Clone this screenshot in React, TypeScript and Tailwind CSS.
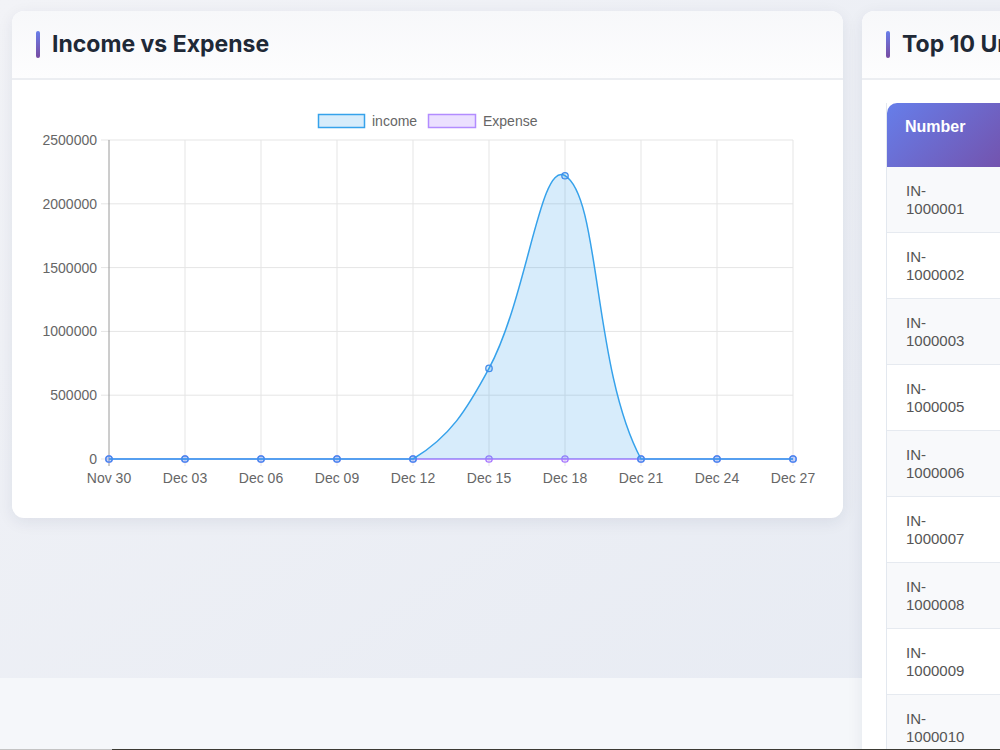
const X0 = 109;
const STEP = 76;
const labels = ["Nov 30", "Dec 03", "Dec 06", "Dec 09", "Dec 12", "Dec 15", "Dec 18", "Dec 21", "Dec 24", "Dec 27"];
const income = [0, 0, 0, 0, 0, 710000, 2220000, 0, 0, 0];
const yTicks = [2500000, 2000000, 1500000, 1000000, 500000, 0];

const yOf = (v: number) => 459 - (v / 2500000) * 319;

const curve =
  "M109,459 L413,459 C450,436.9 466.9,409.6 489,368.4 C527.7,296.3 539.8,160.7 565,175.7 C600.6,196.9 592.7,369 641,459 L793,459";

const font = "Liberation Sans, Arial, sans-serif";

function Chart() {
  return (
    <svg width="783" height="391" viewBox="36 103 783 391" className="block">
      {/* legend */}
      <rect x="318.5" y="114.5" width="46" height="13" fill="rgba(54,162,235,0.2)" stroke="rgb(54,162,235)" strokeWidth="1.5" />
      <text x="372" y="126" fontSize="14" fill="#666" fontFamily={font}>income</text>
      <rect x="428.5" y="114.5" width="47" height="13" fill="rgba(153,102,255,0.2)" stroke="rgb(178,140,255)" strokeWidth="1.5" />
      <text x="483" y="126" fontSize="14" fill="#666" fontFamily={font}>Expense</text>

      {/* grid */}
      {yTicks.map((t) => (
        <g key={t}>
          <line x1="101" x2="793" y1={yOf(t)} y2={yOf(t)} stroke="#e5e5e5" strokeWidth="1" />
          <text x="97" y={yOf(t) + 5} textAnchor="end" fontSize="14" fill="#666" fontFamily={font}>
            {t}
          </text>
        </g>
      ))}
      {labels.map((l, i) => (
        <g key={l}>
          <line x1={X0 + STEP * i} x2={X0 + STEP * i} y1="140" y2="466" stroke={i === 0 ? "#9a9a9a" : "#e5e5e5"} strokeWidth="1" />
          <text x={X0 + STEP * i} y="483" textAnchor="middle" fontSize="14" fill="#666" fontFamily={font}>
            {l}
          </text>
        </g>
      ))}

      {/* expense */}
      <line x1="109" x2="793" y1="459" y2="459" stroke="rgb(168,120,255)" strokeWidth="1.5" />
      {labels.map((l, i) => (
        <circle key={"e" + l} cx={X0 + STEP * i} cy="459" r="3.2" fill="rgba(153,102,255,0.2)" stroke="rgb(168,120,255)" strokeWidth="1.3" />
      ))}

      {/* income */}
      <path d={curve + " Z"} fill="rgba(54,162,235,0.2)" />
      <path d={curve} fill="none" stroke="rgb(54,162,235)" strokeWidth="1.5" />
      {income.map((v, i) => (
        <circle key={"i" + i} cx={X0 + STEP * i} cy={yOf(v)} r="3.2" fill="rgba(54,162,235,0.2)" stroke="rgb(66,140,235)" strokeWidth="1.3" />
      ))}
    </svg>
  );
}

function CardHeader({ title }: { title: string }) {
  return (
    <div className="flex h-[69px] items-center gap-3 border-b-2 border-[#eceef2] bg-gradient-to-b from-[#f7f8fa] to-[#fdfdfe] px-6">
      <span className="h-[27px] w-1 rounded-full bg-gradient-to-b from-[#667eea] to-[#764ba2]" />
      <h3 className="whitespace-nowrap font-['Inter',sans-serif] text-[23px] font-bold text-[#1f2937]">{title}</h3>
    </div>
  );
}

const invoices = ["1000001", "1000002", "1000003", "1000005", "1000006", "1000007", "1000008", "1000009", "1000010"];

function TableCard() {
  return (
    <div className="w-[831px] shrink-0 overflow-hidden rounded-xl bg-white shadow-[0_4px_16px_rgba(30,40,80,0.08)]">
      <CardHeader title="Top 10 Unpaid Invoices" />
      <div className="px-6 pt-[23px]">
        <div className="border-l border-[#e3e8ef]">
          <div className="h-[64px] rounded-tl-[10px] bg-[linear-gradient(135deg,#667eea_0px,#764ba2_150px)] pl-[18px] pt-[12px] text-[16px] font-bold text-white">
            Number
          </div>
          {invoices.map((n, i) => (
            <div
              key={n}
              className={`border-b border-[#e6eaf0] pl-[19px] pb-[14px] pt-[15px] text-[15px] leading-[18px] text-[#555] ${i % 2 === 0 ? "bg-[#f8f9fb]" : "bg-white"}`}
            >
              IN-
              <br />
              {n}
            </div>
          ))}
        </div>
      </div>
    </div>
  );
}

export default function App() {
  return (
    <div className="relative h-[750px] w-[1000px] overflow-hidden bg-[#f5f7fa] font-['Liberation_Sans',Arial,sans-serif]">
      <div className="h-[678px] bg-gradient-to-br from-[#f2f3f7] to-[#e7ebf3] pl-3 pt-[11px]">
        <div className="flex items-start gap-[19px]">
          <div className="w-[831px] shrink-0 overflow-hidden rounded-xl bg-white shadow-[0_4px_16px_rgba(30,40,80,0.08)]">
            <CardHeader title="Income vs Expense" />
            <div className="px-6 pb-6 pt-[23px]">
              <Chart />
            </div>
          </div>
          <TableCard />
        </div>
      </div>
      <div className="absolute bottom-0 left-0 flex h-px w-full">
        <div className="w-[112px] bg-[#c4c4c4]" />
        <div className="flex-1 bg-[#3b3a33]" />
      </div>
    </div>
  );
}
